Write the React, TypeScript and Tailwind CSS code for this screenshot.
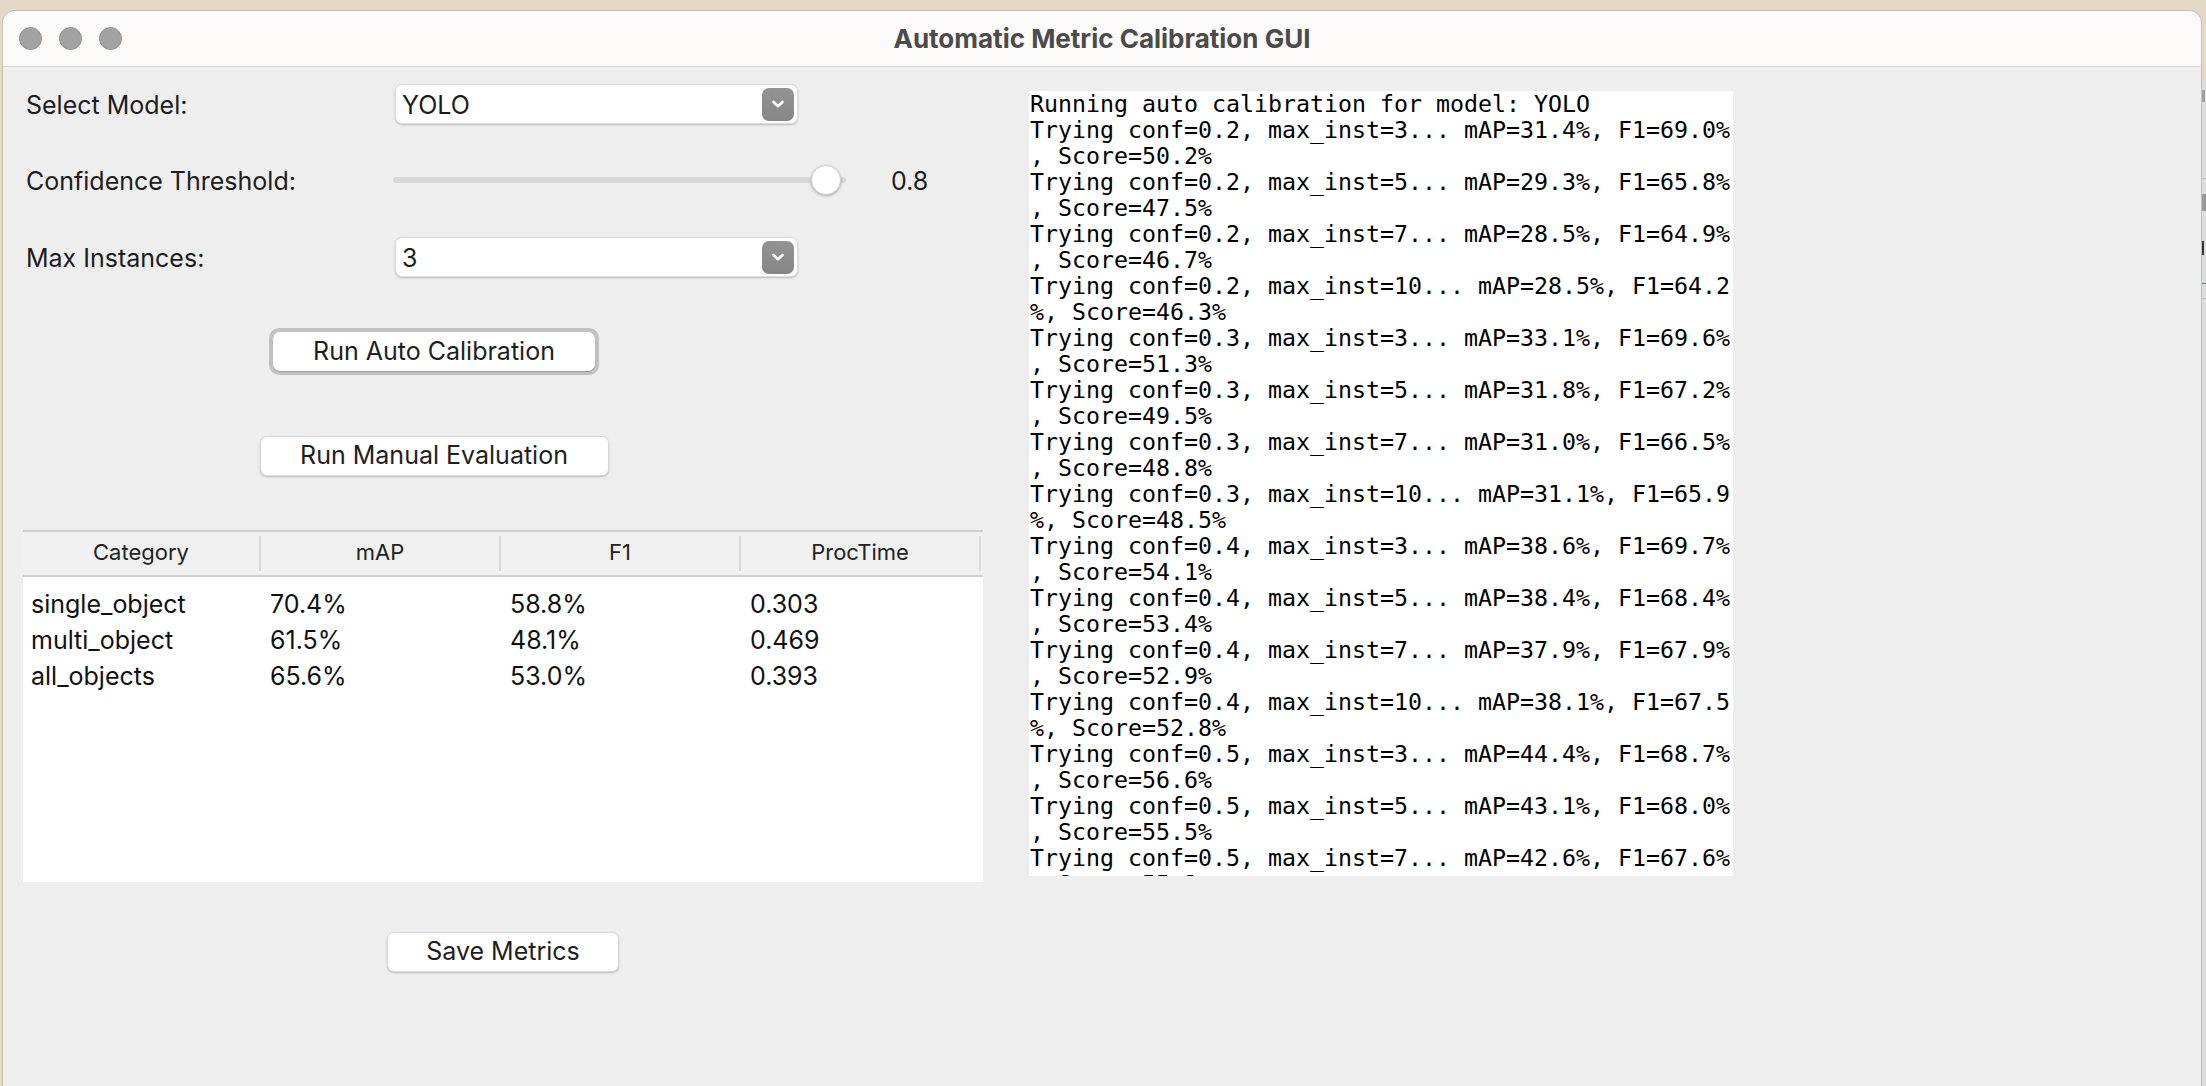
import React from 'react'

const entries = [
  ['0.2', '3', '31.4', '69.0', '50.2'],
  ['0.2', '5', '29.3', '65.8', '47.5'],
  ['0.2', '7', '28.5', '64.9', '46.7'],
  ['0.2', '10', '28.5', '64.2', '46.3'],
  ['0.3', '3', '33.1', '69.6', '51.3'],
  ['0.3', '5', '31.8', '67.2', '49.5'],
  ['0.3', '7', '31.0', '66.5', '48.8'],
  ['0.3', '10', '31.1', '65.9', '48.5'],
  ['0.4', '3', '38.6', '69.7', '54.1'],
  ['0.4', '5', '38.4', '68.4', '53.4'],
  ['0.4', '7', '37.9', '67.9', '52.9'],
  ['0.4', '10', '38.1', '67.5', '52.8'],
  ['0.5', '3', '44.4', '68.7', '56.6'],
  ['0.5', '5', '43.1', '68.0', '55.5'],
  ['0.5', '7', '42.6', '67.6', '55.2'],
]

// Tk text widget wraps by character at 50 columns
const logLines: string[] = ['Running auto calibration for model: YOLO']
entries.forEach(([conf, inst, map, f1, score]) => {
  const full = `Trying conf=${conf}, max_inst=${inst}... mAP=${map}%, F1=${f1}%, Score=${score}%`
  const parts = full.match(/.{1,50}/g) || []
  logLines.push(...parts)
})

const rows = [
  ['single_object', '70.4%', '58.8%', '0.303'],
  ['multi_object', '61.5%', '48.1%', '0.469'],
  ['all_objects', '65.6%', '53.0%', '0.393'],
]

const ui = { fontFamily: 'Inter, Roboto, "Liberation Sans", sans-serif' }

function Combo({ value }: { value: string }) {
  return (
    <div className="w-[403px] h-[40px] bg-white rounded-[7px] border border-[#dcdcdc] shadow-[0_1px_2px_rgba(0,0,0,0.22)] flex items-center justify-between pl-[6px] pr-[3px]">
      <span className="text-[25px] text-[#1c1c1c] pt-[3px]">{value}</span>
      <div className="w-[32px] h-[33px] rounded-[7px] bg-gradient-to-b from-[#939393] to-[#868686] flex items-center justify-center">
        <svg width="14" height="10" viewBox="0 0 14 10">
          <path d="M2.5 3 L7 7.2 L11.5 3" fill="none" stroke="white" strokeWidth="2.6" strokeLinecap="round" strokeLinejoin="round" />
        </svg>
      </div>
    </div>
  )
}

function Button({ label, w }: { label: string; w: string }) {
  return (
    <div className={`${w} h-[40px] bg-white rounded-[7px] border border-[#d9d9d9] shadow-[0_1px_2px_rgba(0,0,0,0.22)] flex items-center justify-center text-[25px] text-[#1e1e1e]`}>
      {label}
    </div>
  )
}

export default function App() {
  return (
    <div className="w-[2206px] h-[1086px] bg-[#e4d8c6] overflow-hidden flex pt-[10px] pl-[2px]" style={ui}>
      <div className="w-[2200px] h-[1076px] bg-[#eeeeee] rounded-t-[13px] border-t border-x border-[#c9bfb2] flex flex-col overflow-hidden">
        {/* title bar */}
        <div className="h-[56px] bg-[#fbfaf8] border-b border-[#d7d7d7] flex items-center justify-center relative shrink-0">
          <div className="absolute left-[16px] top-[16px] flex gap-[17px]">
            <span className="w-[23px] h-[23px] rounded-full bg-[#a2a2a2] border border-[#949494]" />
            <span className="w-[23px] h-[23px] rounded-full bg-[#a2a2a2] border border-[#949494]" />
            <span className="w-[23px] h-[23px] rounded-full bg-[#a2a2a2] border border-[#949494]" />
          </div>
          <span className="text-[26px] leading-[32px] font-bold text-[#4b4b4b]">Automatic Metric Calibration GUI</span>
        </div>

        {/* body */}
        <div className="flex pl-[20px]">
          <div className="w-[960px] flex flex-col">
            <div className="mt-[17px] h-[40px] flex items-center">
              <div className="w-[372px] pl-[3px] pt-[4px] text-[25px] text-[#1c1c1c]">Select Model:</div>
              <Combo value="YOLO" />
            </div>

            <div className="mt-[36px] h-[40px] flex items-center">
              <div className="w-[370px] pl-[3px] pt-[3px] text-[25px] text-[#1c1c1c]">Confidence Threshold:</div>
              <div className="w-[453px] h-[40px] relative flex items-center">
                <div className="w-full h-[6px] rounded-full bg-[#d8d8d8]" />
                <div className="absolute left-[418px] top-[5px] w-[30px] h-[30px] rounded-full bg-white border border-[#d2d2d2] shadow-[0_1px_3px_rgba(0,0,0,0.3)]" />
              </div>
              <div className="ml-[45px] pt-[3px] text-[25px] text-[#1c1c1c]">0.8</div>
            </div>

            <div className="mt-[37px] h-[40px] flex items-center">
              <div className="w-[372px] pl-[3px] pt-[3px] text-[25px] text-[#1c1c1c]">Max Instances:</div>
              <Combo value="3" />
            </div>

            <div className="w-[822px] flex justify-center mt-[51px]">
              <div className="w-[330px] h-[47px] rounded-[10px] bg-[#c2c2c2] p-[4px]">
                <div className="w-full h-full bg-white rounded-[7px] shadow-[0_1px_1px_rgba(0,0,0,0.2)] flex items-center justify-center text-[25px] text-[#1e1e1e]">
                  Run Auto Calibration
                </div>
              </div>
            </div>

            <div className="w-[822px] flex justify-center mt-[61px]">
              <Button label="Run Manual Evaluation" w="w-[349px]" />
            </div>

            {/* results table */}
            <div className="mt-[54px] w-[960px] h-[352px] bg-white flex flex-col">
              <div className="h-[47px] bg-[#f0f0f0] border-t-2 border-b-2 border-[#d0d0d0] flex items-center">
                {['Category', 'mAP', 'F1', 'ProcTime'].map((h, i) => (
                  <div
                    key={h}
                    className={`${i === 0 ? 'w-[238px]' : 'w-[240px]'} h-[35px] flex items-center justify-center pb-[3px] text-[22px] text-[#222222] border-r-2 border-[#dadada]`}
                  >
                    {h}
                  </div>
                ))}
              </div>
              <div className="pt-[10px]">
                {rows.map((r) => (
                  <div key={r[0]} className="h-[36px] flex items-center text-[25px] text-[#111111]">
                    <div className="w-[238px] pl-[8px]">{r[0]}</div>
                    <div className="w-[240px] pl-[9px]">{r[1]}</div>
                    <div className="w-[240px] pl-[9px]">{r[2]}</div>
                    <div className="w-[240px] pl-[9px]">{r[3]}</div>
                  </div>
                ))}
              </div>
            </div>

            <div className="w-[960px] flex justify-center mt-[50px]">
              <Button label="Save Metrics" w="w-[232px]" />
            </div>
          </div>

          {/* log output */}
          <div className="ml-[46px] mt-[24px] w-[704px] h-[785px] bg-white overflow-hidden pl-[1px]">
            {logLines.map((l, i) => (
              <div
                key={i}
                className="h-[26px] leading-[26px] whitespace-pre text-[23.25px] text-black"
                style={{ fontFamily: '"DejaVu Sans Mono", monospace' }}
              >
                {l}
              </div>
            ))}
          </div>

          <div className="flex-1" />
        </div>
      </div>

      {/* edge of the window behind */}
      <div className="w-[4px] h-[1076px] mt-[70px] bg-[#dedede] flex flex-col">
        <div className="h-[12px] mt-[10px] bg-[#a0a0a0] w-[3px]" />
        <div className="h-px mt-[76px] bg-[#bcbcbc]" />
        <div className="h-[17px] mt-[15px] bg-[#9a9a9a]" />
        <div className="h-[14px] mt-[30px] bg-[#333333] w-[2px]" />
        <div className="h-px mt-[28px] bg-[#3f7c8a]" />
        <div className="h-px mt-[14px] bg-[#bcbcbc]" />
      </div>
    </div>
  )
}
